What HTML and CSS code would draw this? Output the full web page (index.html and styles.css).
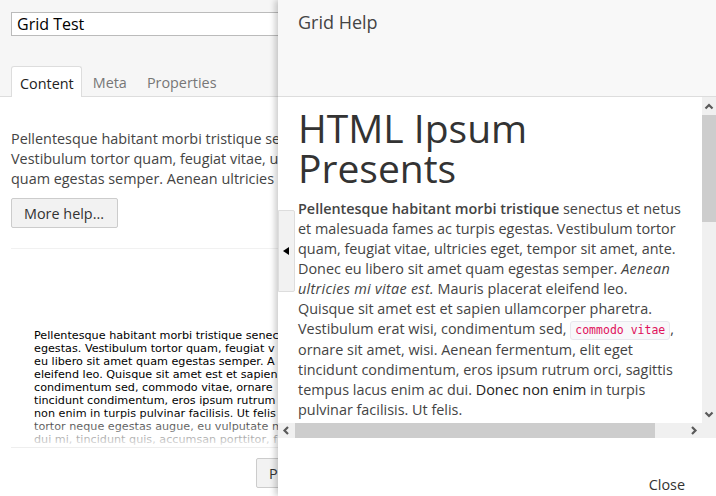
FILE: index.html
```html
<!doctype html>
<html lang="en-US">

<head>
  <meta charset="UTF-8" />
  <title>Grid Test</title>
  <link rel="stylesheet" href="styles.css">
</head>

<body>
  <div class="page">
    <div class="page-inner">
      <div class="page-head">
        <input class="title-input" type="text" value="Grid Test">
        <div class="tabs">
          <a class="tab active">Content</a>
          <a class="tab">Meta</a>
          <a class="tab">Properties</a>
        </div>
      </div>
      <div class="page-body">
        <p class="intro">
          Pellentesque habitant morbi tristique se<br>
          Vestibulum tortor quam, feugiat vitae, u<br>
          quam egestas semper. Aenean ultricies
        </p>
        <button class="btn">More help...</button>
        <div class="preview">
          <div class="preview-text">
            Pellentesque habitant morbi tristique senec<br>
            egestas. Vestibulum tortor quam, feugiat v<br>
            eu libero sit amet quam egestas semper. A<br>
            eleifend leo. Quisque sit amet est et sapien<br>
            condimentum sed, commodo vitae, ornare<br>
            tincidunt condimentum, eros ipsum rutrum<br>
            non enim in turpis pulvinar facilisis. Ut felis<br>
            tortor neque egestas augue, eu vulputate m<br>
            dui mi, tincidunt quis, accumsan porttitor, f
          </div>
        </div>
        <div class="preview-foot">
          <button class="btn btn-cut">P</button>
        </div>
      </div>
    </div>
  </div>

  <div class="help-panel">
    <div class="help-head">Grid Help</div>
    <div class="help-middle">
      <div class="help-scroll">
        <div class="help-content">
          <h1>HTML Ipsum Presents</h1>
          <p>
            <strong>Pellentesque habitant morbi tristique</strong> senectus et netus<br>
            et malesuada fames ac turpis egestas. Vestibulum tortor<br>
            quam, feugiat vitae, ultricies eget, tempor sit amet, ante.<br>
            Donec eu libero sit amet quam egestas semper. <em>Aenean<br>
            ultricies mi vitae est.</em> Mauris placerat eleifend leo.<br>
            Quisque sit amet est et sapien ullamcorper pharetra.<br>
            Vestibulum erat wisi, condimentum sed, <code>commodo vitae</code>,<br>
            ornare sit amet, wisi. Aenean fermentum, elit eget<br>
            tincidunt condimentum, eros ipsum rutrum orci, sagittis<br>
            tempus lacus enim ac dui. <a>Donec non enim</a> in turpis<br>
            pulvinar facilisis. Ut felis.
          </p>
        </div>
        <div class="vbar">
          <svg class="arrow" width="14" height="18" viewBox="0 0 14 18"><path d="M3.500 11.500 7 8l3.500 3.500" /></svg>
          <div class="vthumb"></div>
          <div class="vspace"></div>
          <svg class="arrow" width="14" height="18" viewBox="0 0 14 18"><path d="M3.500 7.500 7 11l3.500-3.500" /></svg>
        </div>
      </div>
      <div class="hbar">
        <svg class="arrow" width="17" height="15" viewBox="0 0 17 15"><path d="M10 4 6.500 7.500 10 11" /></svg>
        <div class="hthumb"></div>
        <div class="hspace"></div>
        <svg class="arrow" width="17" height="15" viewBox="0 0 17 15"><path d="M7 4l3.500 3.500L7 11" /></svg>
      </div>
    </div>
    <div class="help-foot"><a class="close-link">Close</a></div>
    <div class="panel-handle">
      <svg width="6" height="8" viewBox="0 0 6 8"><path d="M6 0v8L0 4z" /></svg>
    </div>
  </div>
</body>

</html>
```

FILE: styles.css
```css
body {
  margin: 0;
  padding: 0;
  font-family: "Open Sans", sans-serif;
  font-size: 14.4px;
  line-height: 20px;
  color: #444;
  background-color: #fff;
  overflow: hidden;
  height: 496px;
}

.page {
  width: 278px;
  height: 496px;
  overflow: hidden;
}

.page-inner {
  width: 716px;
}

.page-head {
  background-color: #f6f6f6;
  border-bottom: 1px solid #ddd;
  padding: 12px 0 0 11px;
  height: 84px;
}

.title-input {
  display: block;
  box-sizing: border-box;
  width: 694px;
  height: 24px;
  padding: 0 5px;
  border: 1px solid #bbb;
  background-color: #fff;
  font-family: "Open Sans", sans-serif;
  font-size: 16px;
  color: #000;
}

.tabs {
  display: flex;
  margin-top: 30px;
}

.tab {
  height: 30px;
  line-height: 33px;
  padding: 0 8px;
  margin-right: 4px;
  color: #777;
}

.tab.active {
  color: #222;
  background-color: #fff;
  border: 1px solid #ddd;
  border-bottom: 0;
  border-radius: 3px 3px 0 0;
  padding: 0 7px 0 8px;
  margin-right: 3px;
}

.page-body {
  padding: 32px 11px 0;
}

.intro {
  margin: 0 0 9px;
  white-space: nowrap;
}

.btn {
  box-sizing: border-box;
  height: 30px;
  padding: 0 13px 0 12px;
  border: 1px solid #ccc;
  border-radius: 2px;
  background-color: #f2f2f2;
  font-family: "Open Sans", sans-serif;
  font-size: 14.4px;
  color: #333;
}

.btn-cut {
  width: 60px;
  padding: 0 0 0 12px;
  text-align: left;
}

.preview {
  position: relative;
  margin-top: 20px;
  height: 198px;
  overflow: hidden;
  border-top: 1px solid #f1f1f1;
  border-bottom: 1px solid #eee;
}

.preview::after {
  content: "";
  position: absolute;
  left: 0;
  right: 0;
  bottom: 0;
  height: 34px;
  background: linear-gradient(rgba(255, 255, 255, 0), rgba(255, 255, 255, 0.95));
}

.preview-text {
  padding: 80px 23px 0;
  font-family: "DejaVu Sans", sans-serif;
  font-size: 11.2px;
  line-height: 13px;
  color: #000;
  white-space: nowrap;
}

.preview-foot {
  display: flex;
  margin-top: 10px;
  padding-left: 245px;
}

.help-panel {
  position: absolute;
  top: 0;
  left: 278px;
  right: 0;
  height: 496px;
  display: flex;
  flex-direction: column;
  background-color: #fff;
  box-shadow: -3px 0 6px rgba(0, 0, 0, 0.2);
}

.help-head {
  box-sizing: border-box;
  height: 97px;
  padding: 10px 20px;
  background-color: #f8f8f8;
  border-bottom: 1px solid #ddd;
  font-size: 18px;
  line-height: 24px;
  color: #444;
}

.help-scroll {
  display: flex;
  height: 326px;
  overflow: hidden;
}

.help-content {
  flex: 1;
  overflow: hidden;
  padding: 11px 20px 0;
}

.help-content h1 {
  margin: 0 0 11px;
  font-size: 39px;
  font-weight: 400;
  line-height: 40px;
  color: #333;
}

.help-content p {
  margin: 0;
  white-space: nowrap;
}

.help-content strong {
  font-weight: 600;
}

.help-content em {
  letter-spacing: 0.3px;
}

.help-content a {
  color: #222;
}

.help-content code {
  display: inline-block;
  padding: 0 4px;
  border: 1px solid #e8e8ee;
  border-radius: 3px;
  background-color: #f8f8fa;
  font-family: "DejaVu Sans Mono", monospace;
  font-size: 11.500px;
  line-height: 17px;
  color: #e0105a;
}

.vbar {
  display: flex;
  flex-direction: column;
  width: 14px;
  background-color: #f0f0f0;
}

.vthumb {
  height: 107px;
  background-color: #cdcdcd;
}

.vspace {
  flex: 1;
}

.hbar {
  display: flex;
  height: 15px;
  padding-right: 14px;
  background-color: #f0f0f0;
}

.hthumb {
  width: 360px;
  background-color: #cdcdcd;
}

.hspace {
  flex: 1;
}

.arrow {
  display: block;
  flex: none;
}

.arrow path {
  fill: none;
  stroke: #5a5a5a;
  stroke-width: 2.200;
}

.help-foot {
  flex: 1;
  display: flex;
  justify-content: flex-end;
  align-items: flex-end;
  padding: 0 31px 1px 0;
}

.close-link {
  color: #333;
}

.panel-handle {
  position: absolute;
  top: 210px;
  left: 0;
  box-sizing: border-box;
  width: 17px;
  height: 82px;
  display: flex;
  align-items: center;
  justify-content: center;
  padding-right: 1px;
  background-color: #f2f2f2;
  border: 1px solid #ddd;
  border-radius: 0 2px 2px 0;
}

.panel-handle path {
  fill: #000;
}
```
